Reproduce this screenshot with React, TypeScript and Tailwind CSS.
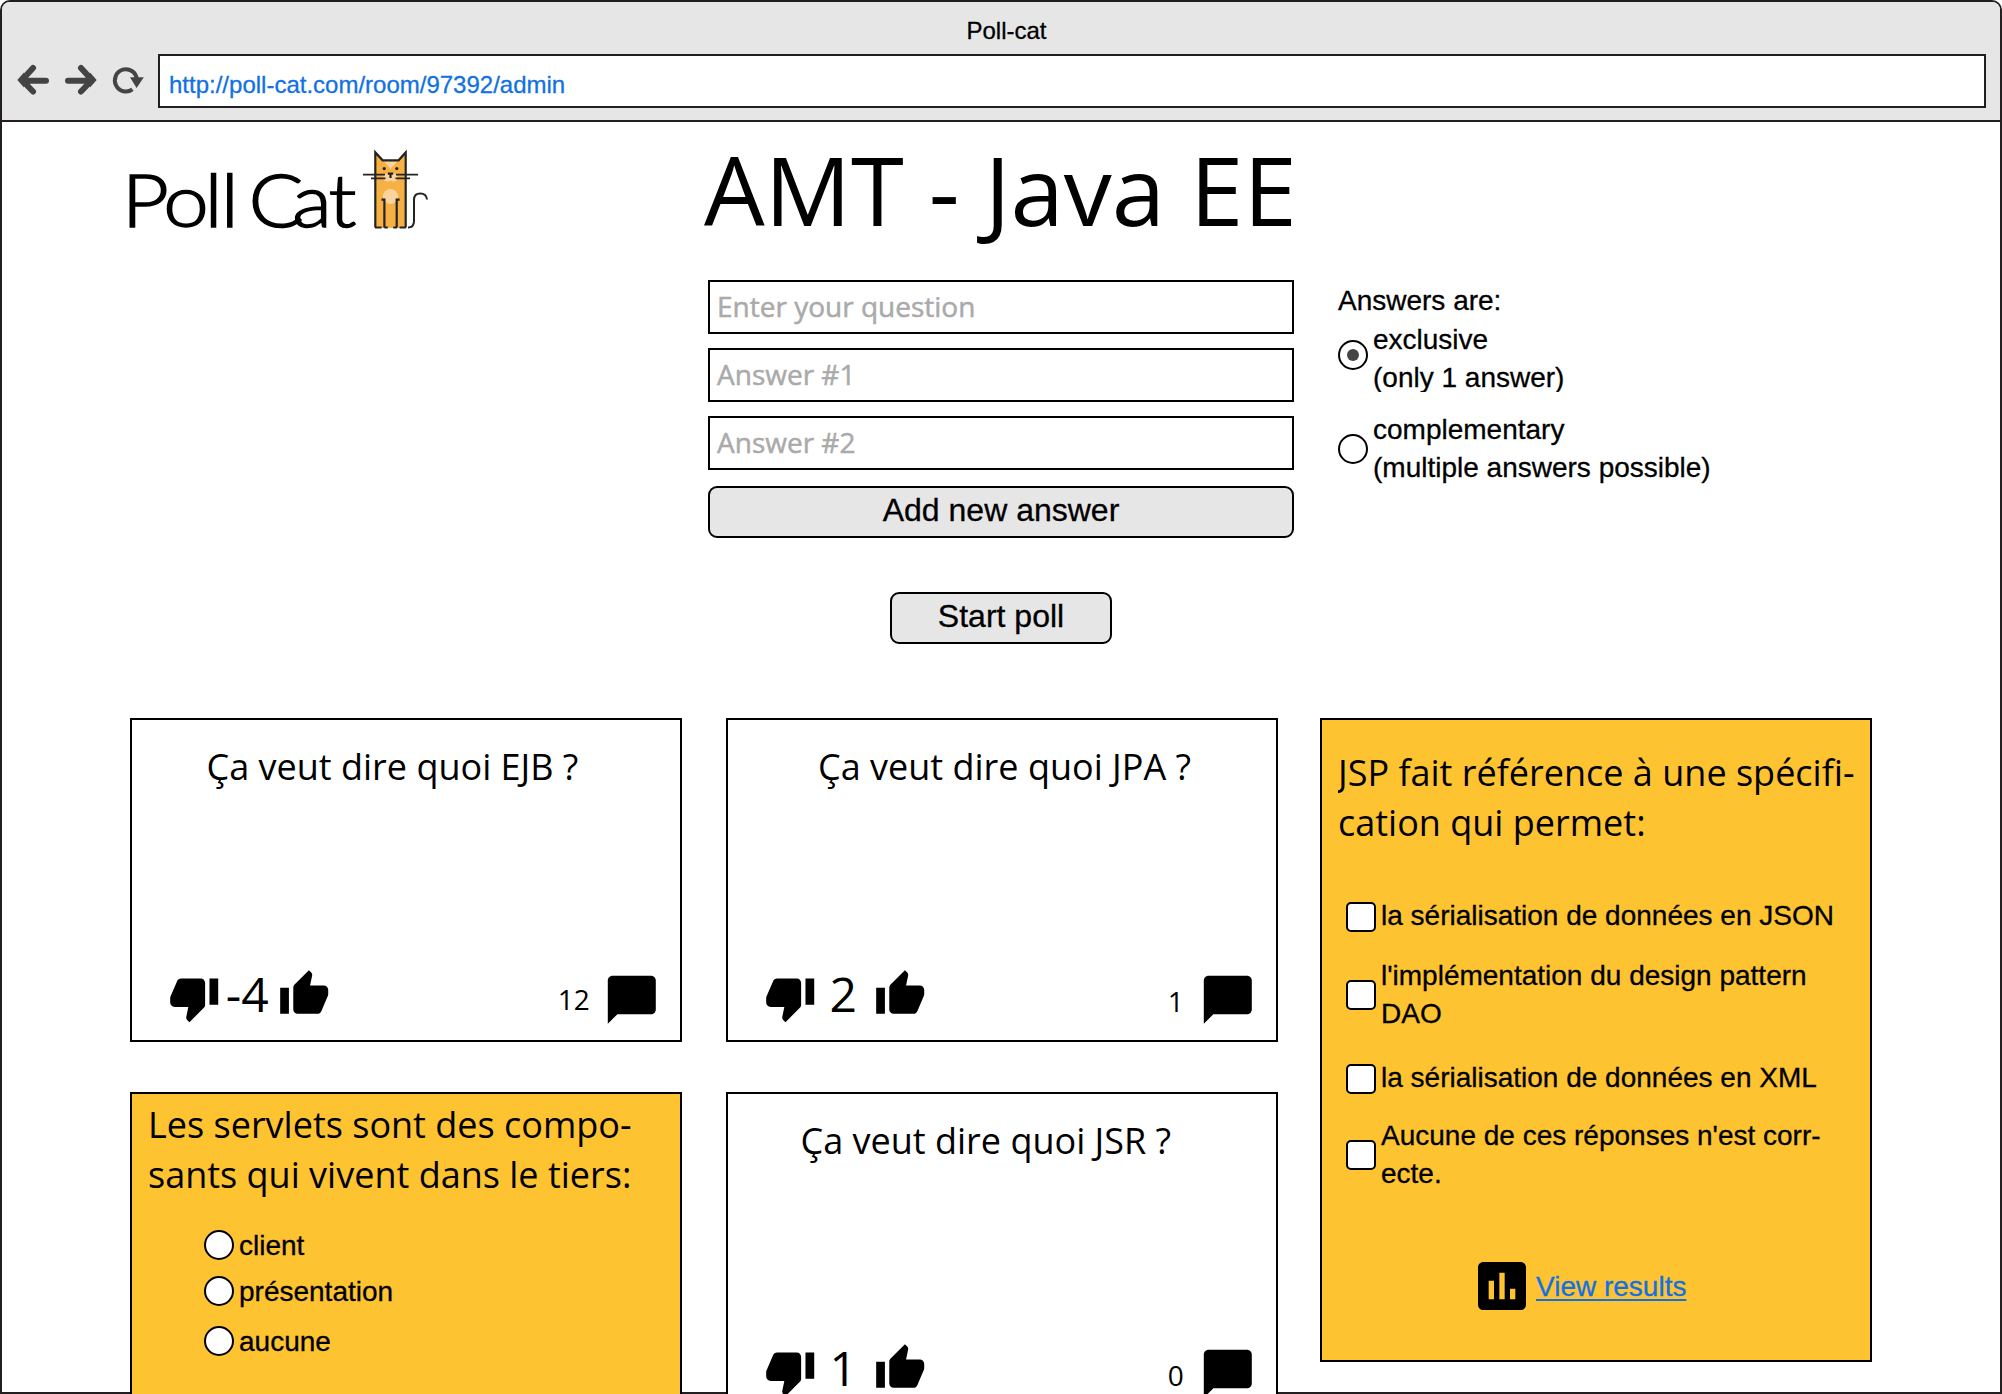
import type { ReactNode } from "react";
import { MdAssessment, MdChatBubble, MdThumbDown, MdThumbUp } from "react-icons/md";

const sans = "font-['Liberation_Sans',Arial,sans-serif] [-webkit-text-stroke:0.3px]";
const open = "font-['Open_Sans',sans-serif] [-webkit-text-stroke:0px]";

function NavIcons() {
  return (
    <svg className="h-[54px] w-[156px] shrink-0" viewBox="2 54 156 54" fill="none" stroke="#444444">
      <g strokeWidth="6" strokeLinecap="round">
        <path d="M46 80.7H25M33 68L22 80L33 91.5" />
        <path d="M68 80.7H89M81 68L92 80L81 91.5" />
      </g>
      <path d="M17.3 80L24 72.5V87.5ZM96.7 80L90 72.5V87.5Z" fill="#444444" stroke="none" />
      <path d="M132.4 89.4A11 11.2 0 1 1 136.8 79" strokeWidth="4" />
      <path d="M130 77.2H143.8L136.6 88Z" fill="#444444" stroke="none" />
    </svg>
  );
}

function Logo() {
  return (
    <svg className="mt-6 h-[90px] w-[310px] overflow-visible [-webkit-text-stroke:0px]" viewBox="128 146 310 90">
      <text
        y="227.5"
        x="108.8 145.7 182.5 197 221.8 261 293.4"
        transform="scale(1.12 1)"
        className="font-['Lato',sans-serif] text-[73px] font-light"
        fill="#000"
        stroke="#000"
        strokeWidth="1.4"
      >
        PollCat
      </text>
      <path d="M375.2 152L382.5 160.5H398.5L405.8 152V228H375.2Z" fill="#f7b044" />
      <path d="M384 161.3H397.5L390.5 169Z" fill="#fbd3a0" />
      <circle cx="387.3" cy="177.5" r="4" fill="#fbd3a0" />
      <circle cx="393.7" cy="177.5" r="4" fill="#fbd3a0" />
      <circle cx="390.5" cy="196.5" r="7.6" fill="#fbd3a0" />
      <g fill="none" stroke="#23241f" strokeWidth="2.2">
        <path d="M375.3 227.6V152.4L382.6 160.3H398.6L405.7 152.4V227.6" />
        <path d="M375 227.5H381.6M384.3 227.5H387.8M393.2 227.5H397M399.6 227.5H406" />
        <path d="M381.5 199.6H384.4V227.5M399.6 199.6H396.7V227.5" />
        <path d="M363 174.6H385M396 174.6H418M371 178.4H385.5M395.5 178.4H410" strokeWidth="1.9" />
        <path d="M387.8 173.6H393.2M390.5 173.6V178" />
        <path
          d="M408 227.6C412.6 227.6 414 225.4 414 221V200C414 196 416.5 193.6 420.3 193.6C424 193.6 426.6 196 427 199.5"
          strokeWidth="2"
        />
      </g>
      <circle cx="384.2" cy="168.6" r="1.6" fill="#23241f" />
      <circle cx="396.8" cy="168.6" r="1.6" fill="#23241f" />
    </svg>
  );
}

function Field({ text }: { text: string }) {
  return (
    <div className="mb-3.5 h-[54px] border-2 border-black bg-white pl-[7px] font-['Open_Sans',sans-serif] text-[28px] leading-[48px] text-[#aaaaaa] [-webkit-text-stroke:0.5px]">
      {text}
    </div>
  );
}

function Radio({ checked = false, className = "" }: { checked?: boolean; className?: string }) {
  return (
    <span className={`flex size-[30px] shrink-0 items-center justify-center rounded-full border-2 border-black bg-white ${className}`}>
      {checked && <span className="size-3 rounded-full bg-[#444444]" />}
    </span>
  );
}

function Choice({ className, children }: { className: string; children: ReactNode }) {
  return (
    <label className={`flex h-[30px] items-start ${className}`}>
      <Radio />
      <span className="ml-[5px] leading-[32px]">{children}</span>
    </label>
  );
}

function CheckRow({ className, boxClass, children }: { className: string; boxClass: string; children: ReactNode }) {
  return (
    <label className={`flex items-start ${className}`}>
      <span className={`size-[30px] shrink-0 rounded-[5px] border-2 border-black bg-white ${boxClass}`} />
      <span className="ml-[5px] mt-px whitespace-nowrap leading-[38px]">{children}</span>
    </label>
  );
}

function QuestionCard({
  title,
  titleClass,
  score,
  comments,
  commentsClass,
}: {
  title: string;
  titleClass: string;
  score: string;
  comments: string;
  commentsClass: string;
}) {
  return (
    <article className={`${open} flex h-[324px] flex-col justify-between border-2 border-black bg-white`}>
      <h2 className={`mt-[22px] text-[36px] leading-[50px] ${titleClass}`}>{title}</h2>
      <div className="mb-2 flex h-[66px] items-start pl-[35.8px] pr-[19.6px]">
        <MdThumbDown className="mt-[5.5px] size-[52.4px] shrink-0" />
        <span className="-ml-1.5 -mr-0.5 w-[66px] shrink-0 pt-[5px] text-center text-[48px] leading-[46px]">{score}</span>
        <MdThumbUp className="mt-[2.2px] size-[52.4px] shrink-0" />
        <span className={`ml-auto text-[28px] leading-[40px] ${commentsClass}`}>{comments}</span>
        <MdChatBubble className="mt-[4.8px] size-[57.6px] shrink-0" />
      </div>
    </article>
  );
}

export default function App() {
  return (
    <div className="h-[1394px] w-[2002px] overflow-hidden bg-white">
      <div className={`${sans} flex h-[1394px] flex-col rounded-t-[10px] border-2 border-[#231f20] bg-white text-black`}>
        <header className="h-[120px] shrink-0 rounded-t-lg border-b-2 border-[#231f20] bg-[#e6e6e6]">
          <div className="h-[52px] pl-[11px] pt-[11px] text-center text-2xl leading-[36px]">Poll-cat</div>
          <div className="flex pr-3.5">
            <NavIcons />
            <div className="h-[54px] flex-1 border-2 border-[#231f20] bg-white pl-[9px] pt-1 text-2xl leading-[50px] text-[#1171e3]">
              http://poll-cat.com/room/97392/admin
            </div>
          </div>
        </header>

        <section className="flex h-[596px] shrink-0 pl-[128px]">
          <div className="-ml-0.5 w-[580px] shrink-0">
            <Logo />
          </div>
          <div className="w-[586px] shrink-0">
            <h1 className={`${open} -ml-1 mb-6 whitespace-nowrap text-[96px] leading-[134px]`}>AMT - Java EE</h1>
            <Field text="Enter your question" />
            <Field text="Answer #1" />
            <Field text="Answer #2" />
            <button className="mt-4 block h-[52px] w-full rounded-[9px] border-2 border-black bg-[#e6e6e6] pb-1 text-[32px] leading-[44px]">
              Add new answer
            </button>
            <button className="mx-auto mt-[54px] block h-[52px] w-[222px] rounded-[9px] border-2 border-black bg-[#e6e6e6] pb-1 text-[32px] leading-[44px]">
              Start poll
            </button>
          </div>
          <div className="ml-11 whitespace-nowrap pt-40 text-[28px] leading-[38px]">
            <div>Answers are:</div>
            <label className="mt-px flex h-[71px] items-start overflow-hidden">
              <Radio checked className="mt-[19px]" />
              <span className="ml-[5px]">
                exclusive
                <br />
                (only 1 answer)
              </span>
            </label>
            <label className="mt-[19px] flex items-start">
              <Radio className="mt-[23px]" />
              <span className="ml-[5px]">
                complementary
                <br />
                (multiple answers possible)
              </span>
            </label>
          </div>
        </section>

        <section className="flex shrink-0 items-start pl-[128px]">
          <div className="flex w-[552px] flex-col gap-[50px]">
            <QuestionCard
              title="Ça veut dire quoi EJB ?"
              titleClass="pl-[74.5px]"
              score="-4"
              comments="12"
              commentsClass="mr-[13px] pt-[12.5px]"
            />
            <article className="h-[324px] border-2 border-black bg-[#fdc331]">
              <h2 className={`${open} whitespace-nowrap pl-4 pt-[6px] text-[36px] leading-[50px]`}>
                Les servlets sont des compo-
                <br />
                sants qui vivent dans le tiers:
              </h2>
              <div className="pl-[72px] text-[28px]">
                <Choice className="mt-[30px]">client</Choice>
                <Choice className="mt-4">présentation</Choice>
                <Choice className="mt-5">aucune</Choice>
              </div>
            </article>
          </div>

          <div className="ml-11 flex w-[552px] flex-col gap-[50px]">
            <QuestionCard
              title="Ça veut dire quoi JPA ?"
              titleClass="pl-[90px]"
              score="2"
              comments="1"
              commentsClass="mr-[15px] pt-[14.5px]"
            />
            <QuestionCard
              title="Ça veut dire quoi JSR ?"
              titleClass="pl-[72.5px]"
              score="1"
              comments="0"
              commentsClass="mr-[15px] pt-[14.5px]"
            />
          </div>

          <article className="ml-[42px] h-[644px] w-[552px] border-2 border-black bg-[#fdc331] pl-4 pt-7">
            <h2 className={`${open} overflow-hidden whitespace-nowrap text-[36px] leading-[50px]`}>
              JSP fait référence à une spécifi-
              <br />
              cation qui permet:
            </h2>
            <div className="pl-2 pt-12 text-[28px]">
              <CheckRow className="h-[60px]" boxClass="mt-1.5">
                la sérialisation de données en JSON
              </CheckRow>
              <CheckRow className="h-[102px]" boxClass="mt-6">
                l'implémentation du design pattern
                <br />
                DAO
              </CheckRow>
              <CheckRow className="h-[58px]" boxClass="mt-1.5">
                la sérialisation de données en XML
              </CheckRow>
              <CheckRow className="h-[138px]" boxClass="mt-6">
                Aucune de ces réponses n'est corr-
                <br />
                ecte.
              </CheckRow>
              <div className="flex h-16 items-center pl-[124px]">
                <MdAssessment className="size-16 shrink-0" />
                <a className="ml-0.5 pt-0.5 text-[#1171e3] underline decoration-2 underline-offset-[3px]">View results</a>
              </div>
            </div>
          </article>
        </section>
      </div>
    </div>
  );
}
